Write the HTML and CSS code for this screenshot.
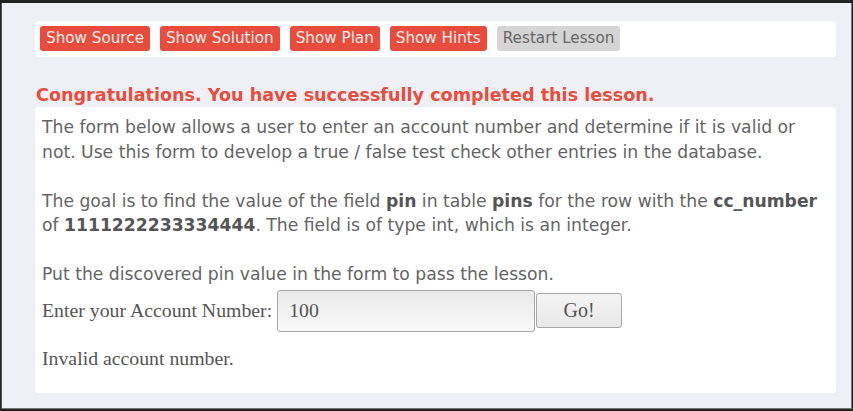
FILE: index.html
```html
<!DOCTYPE html>
<html>
<head>
<meta charset="utf-8">
<link rel="stylesheet" href="styles.css">
</head>
<body>
<div class="frame">
  <div class="toolbar">
    <button class="btn btn-red">Show Source</button>
    <button class="btn btn-red">Show Solution</button>
    <button class="btn btn-red">Show Plan</button>
    <button class="btn btn-red">Show Hints</button>
    <button class="btn btn-gray">Restart Lesson</button>
  </div>
  <div class="congrats">Congratulations. You have successfully completed this lesson.</div>
  <div class="content">
    <p class="para">The form below allows a user to enter an account number and determine if it is valid or not. Use this form to develop a true / false test check other entries in the database.</p>
    <p class="para">The goal is to find the value of the field <b>pin</b> in table <b>pins</b> for the row with the <b>cc_number</b> of <b>1111222233334444</b>. The field is of type int, which is an integer.</p>
    <p class="para last">Put the discovered pin value in the form to pass the lesson.</p>
    <form class="form-row">
      <label class="label">Enter your Account Number:</label>
      <input class="field" type="text" value="100">
      <button class="go" type="button">Go!</button>
    </form>
    <div class="result">Invalid account number.</div>
  </div>
</div>
</body>
</html>
```

FILE: styles.css
```css
html, body {
  margin: 0;
  padding: 0;
  background: #222222;
  height: 411px;
  overflow: hidden;
}
body {
  padding: 3px 0 0 1px;
  box-sizing: border-box;
}
.frame {
  box-sizing: border-box;
  width: 851px;
  height: 406px;
  background: #eff0f5;
  border-left: 1px solid #555;
  border-right: 1px solid #777;
  border-bottom: 1px solid #777;
  padding: 18px 15px 0 33px;
  font-family: "DejaVu Sans", sans-serif;
}
.toolbar {
  background: #ffffff;
  border-radius: 4px;
  padding: 5px 5px 6px 5px;
  display: flex;
  gap: 10px;
}
.btn {
  font-family: "DejaVu Sans", sans-serif;
  font-size: 15.2px;
  line-height: 25px;
  height: 25px;
  padding: 0 6px;
  border: none;
  border-radius: 3px;
  margin: 0;
}
.btn-red {
  background: #e74c3c;
  color: #fbeeee;
}
.btn-gray {
  background: #d5d5d5;
  color: #666666;
}
.congrats {
  margin-top: 26px;
  padding-left: 1px;
  color: #e74c3c;
  font-weight: bold;
  font-size: 17.6px;
  line-height: 24px;
}
.content {
  background: #ffffff;
  border-radius: 4px;
  padding: 8px 7px 25px 7px;
  color: #646464;
  font-size: 17.2px;
  line-height: 24.5px;
}
.para {
  margin: 0 0 24.5px 0;
}
.para.last {
  margin-bottom: 3px;
}
.para b {
  color: #555555;
}
.form-row {
  display: flex;
  align-items: center;
  margin: 0;
  font-family: "Liberation Serif", serif;
  font-size: 19.8px;
  color: #555555;
}
.label {
  margin-right: 5px;
}
.field {
  box-sizing: border-box;
  width: 258px;
  height: 42px;
  border: 1px solid #a8a8a8;
  border-radius: 3px;
  background: linear-gradient(#e9e9e9, #f9f9f9);
  font-family: "Liberation Serif", serif;
  font-size: 19.8px;
  color: #555555;
  padding: 0 11px;
  margin: 0;
}
.go {
  box-sizing: border-box;
  width: 86px;
  height: 35px;
  margin: 0 0 1px 1px;
  border: 1px solid #a8a8a8;
  border-radius: 3px;
  background: linear-gradient(#f4f4f4, #e8e8e8);
  font-family: "Liberation Serif", serif;
  font-size: 20px;
  color: #555555;
}
.result {
  margin-top: 16px;
  font-family: "Liberation Serif", serif;
  font-size: 19.8px;
  line-height: 20px;
  color: #555555;
}
```
